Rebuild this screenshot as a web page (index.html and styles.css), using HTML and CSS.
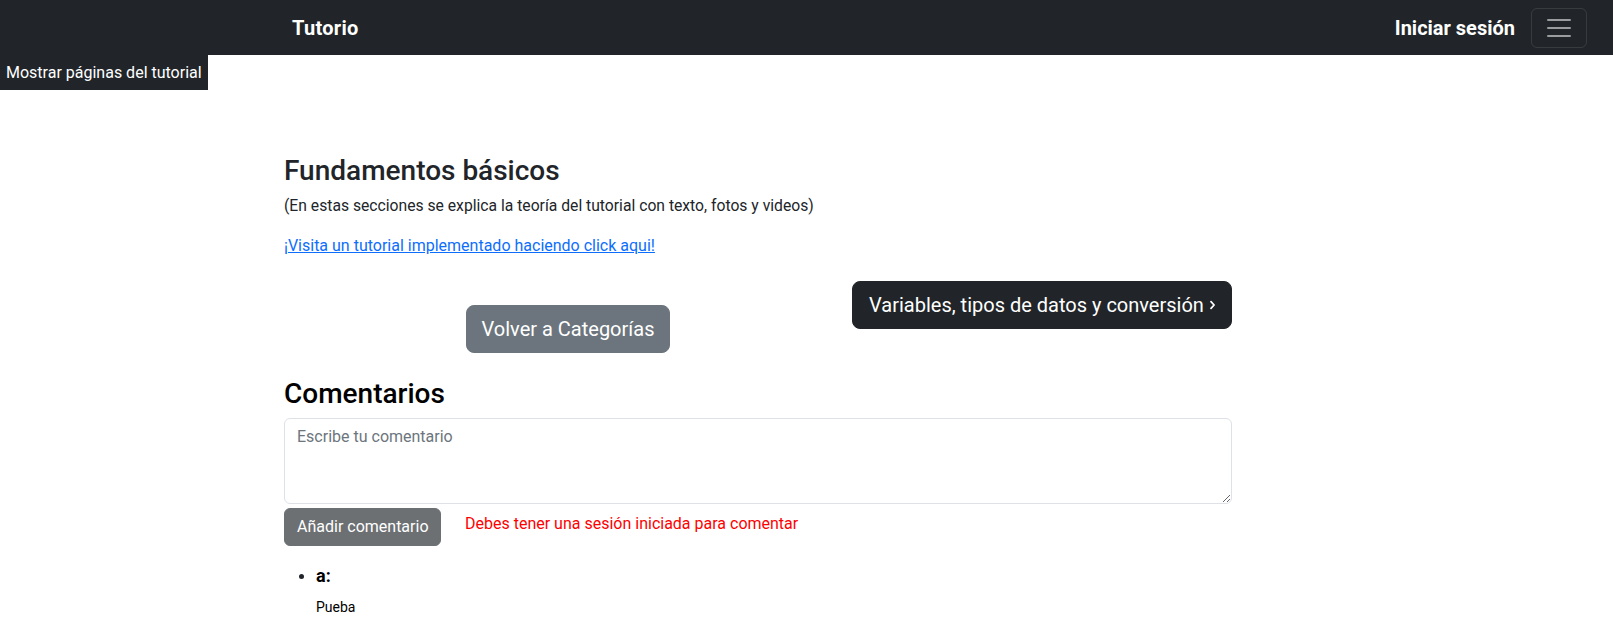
FILE: index.html
```html
<!DOCTYPE html>
<html lang="es">
<head>
<meta charset="utf-8">
<title>Tutorio</title>
<link rel="stylesheet" href="styles.css">
</head>
<body>
<nav class="navbar">
  <a class="brand" href="#">Tutorio</a>
  <div class="nav-right">
    <a class="login" href="#">Iniciar sesión</a>
    <button class="toggler" type="button" aria-label="Menú">
      <svg width="30" height="30" viewBox="0 0 30 30"><path d="M4 7h22M4 15h22M4 23h22" stroke="rgba(255,255,255,0.55)" stroke-width="2" stroke-linecap="round" stroke-miterlimit="10"/></svg>
    </button>
  </div>
</nav>
<div class="side-toggle">Mostrar páginas del tutorial</div>
<main class="main">
  <h3 class="title">Fundamentos básicos</h3>
  <p class="subtitle">(En estas secciones se explica la teoría del tutorial con texto, fotos y videos)</p>
  <p class="link-line"><a href="#">¡Visita un tutorial implementado haciendo click aqui!</a></p>
  <div class="pager">
    <a class="btn-lg btn-gray" href="#">Volver a Categorías</a>
    <a class="btn-lg btn-dark" href="#">Variables, tipos de datos y conversión <svg class="chev" width="10" height="18" viewBox="0 0 10 18"><path d="M2 2.5L8 9l-6 6.5" fill="none" stroke="#fff" stroke-width="3.4" stroke-linecap="round" stroke-linejoin="round"/></svg></a>
  </div>
  <h3 class="comments-title">Comentarios</h3>
  <textarea class="comment-box" rows="3" placeholder="Escribe tu comentario"></textarea>
  <div class="comment-actions">
    <button class="btn-add" type="button">Añadir comentario</button>
    <span class="warn">Debes tener una sesión iniciada para comentar</span>
  </div>
  <ul class="comments">
    <li>
      <div class="author">a:</div>
      <p class="text">Pueba</p>
    </li>
  </ul>
</main>
</body>
</html>
```
FILE: styles.css
```css
* { box-sizing: border-box; }
body {
  margin: 0;
  font-family: Roboto, "Noto Sans", sans-serif;
  font-size: 16px;
  line-height: 1.5;
  color: #212529;
  background: #fff;
}
.navbar {
  height: 55px;
  background: #212529;
  display: flex;
  align-items: center;
  justify-content: space-between;
  padding: 0 26px 0 292px;
}
.brand {
  color: #fff;
  font-size: 20px;
  font-weight: 700;
  line-height: 30px;
  text-decoration: none;
  letter-spacing: 0.3px;
}
.nav-right {
  display: flex;
  align-items: center;
  gap: 16px;
}
.login {
  color: #fff;
  font-size: 20px;
  font-weight: 700;
  line-height: 30px;
  text-decoration: none;
}
.toggler {
  width: 56px;
  height: 40px;
  padding: 0;
  background: transparent;
  border: 1px solid rgba(255,255,255,0.1);
  border-radius: 6px;
  display: flex;
  align-items: center;
  justify-content: center;
}
.side-toggle {
  width: 208px;
  height: 35px;
  line-height: 35px;
  background: #212529;
  color: #fff;
  font-size: 16px;
  padding-left: 6px;
  white-space: nowrap;
}
.main {
  width: 948px;
  margin-left: 284px;
  padding-top: 63.5px;
}
.title {
  margin: 0 0 8px;
  font-size: 28px;
  font-weight: 500;
  line-height: 1.2;
  color: #212529;
}
.subtitle {
  margin: 0 0 16px;
  font-size: 15.7px;
  line-height: 22.5px;
}
.link-line { margin: 0; }
.link-line a { color: #0d6efd; text-decoration: underline; }
.pager {
  display: flex;
  align-items: flex-start;
  margin-top: 23.5px;
}
.btn-lg {
  display: inline-flex;
  align-items: center;
  font-size: 20px;
  line-height: 30px;
  padding: 8px 16px;
  border: 1px solid transparent;
  border-radius: 8px;
  color: #fff;
  text-decoration: none;
  white-space: nowrap;
}
.btn-gray {
  background: #6c757d;
  border-color: #6c757d;
  margin: 24px 0 0 182px;
  width: 204px;
  justify-content: center;
}
.btn-dark {
  background: #212529;
  border-color: #212529;
  margin-left: auto;
  width: 380px;
  justify-content: center;
}
.chev { margin-left: 6px; }
.comments-title {
  margin: 24.4px 0 7px;
  font-size: 28px;
  font-weight: 500;
  line-height: 1.2;
  color: #000;
}
.comment-box {
  display: block;
  width: 100%;
  height: 86px;
  padding: 6px 12px;
  font-family: Roboto, "Noto Sans", sans-serif;
  font-size: 16px;
  line-height: 1.5;
  color: #212529;
  border: 1px solid #dee2e6;
  border-radius: 6px;
  resize: vertical;
}
.comment-box::placeholder { color: #6c757d; opacity: 1; }
.comment-actions {
  display: flex;
  align-items: flex-start;
  gap: 24px;
  margin-top: 4px;
}
.btn-add {
  width: 157px;
  height: 38px;
  padding: 6px 12px;
  font-family: Roboto, "Noto Sans", sans-serif;
  font-size: 16px;
  line-height: 24px;
  color: #fff;
  background: #6d7073;
  border: 1px solid #6d7073;
  border-radius: 6px;
  white-space: nowrap;
}
.warn {
  color: #ff0000;
  font-size: 16px;
  line-height: 24px;
  padding-top: 3.5px;
}
.comments {
  margin: 17.4px 0 0;
  padding-left: 32px;
}
.author {
  font-size: 18px;
  font-weight: 700;
  line-height: 25.5px;
  color: #000;
}
.text {
  margin: 7.8px 0 0;
  font-size: 14px;
  line-height: 21px;
  color: #000;
}
```
